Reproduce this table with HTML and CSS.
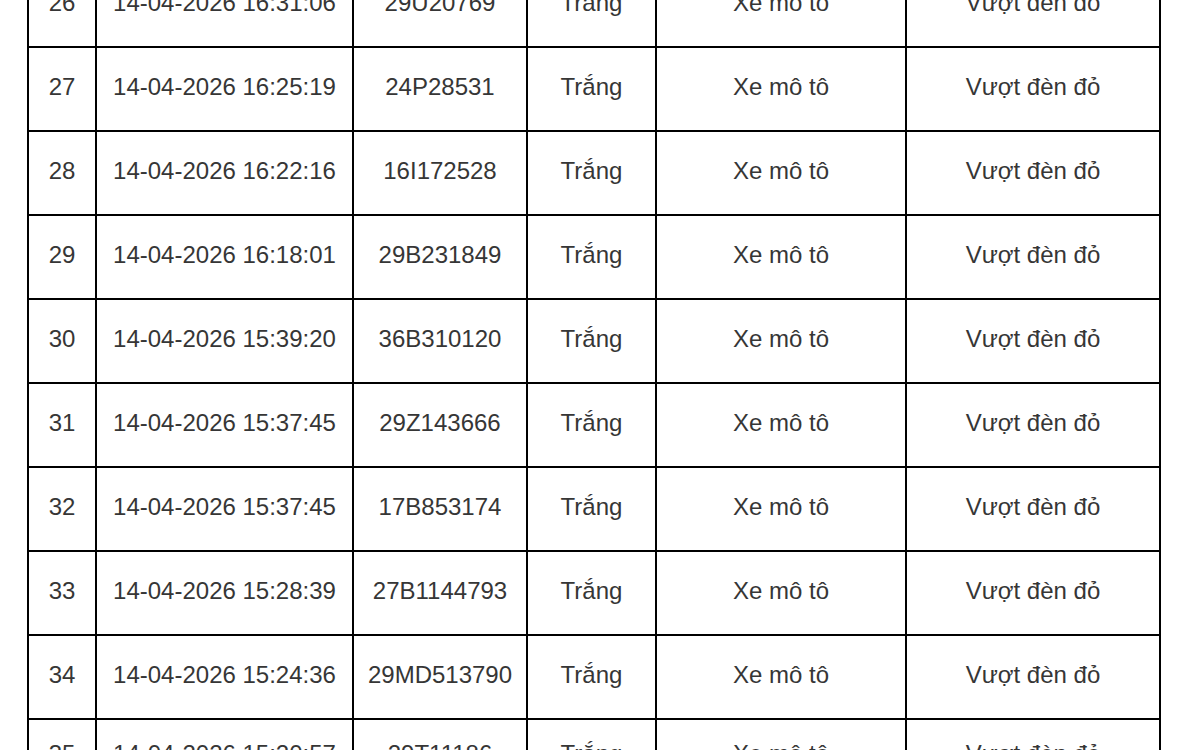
FILE: index.html
```html
<!DOCTYPE html>
<html lang="vi">
<head>
<meta charset="utf-8">
<title>Danh sách vi phạm</title>
<link rel="stylesheet" href="styles.css">
</head>
<body>
<div class="page">
<table class="violations">
<colgroup>
<col class="c-stt"><col class="c-time"><col class="c-plate"><col class="c-color"><col class="c-type"><col class="c-act">
</colgroup>
<tbody>
<tr><td>26</td><td>14-04-2026 16:31:06</td><td>29U20769</td><td>Trắng</td><td>Xe mô tô</td><td>Vượt đèn đỏ</td></tr>
<tr><td>27</td><td>14-04-2026 16:25:19</td><td>24P28531</td><td>Trắng</td><td>Xe mô tô</td><td>Vượt đèn đỏ</td></tr>
<tr><td>28</td><td>14-04-2026 16:22:16</td><td>16I172528</td><td>Trắng</td><td>Xe mô tô</td><td>Vượt đèn đỏ</td></tr>
<tr><td>29</td><td>14-04-2026 16:18:01</td><td>29B231849</td><td>Trắng</td><td>Xe mô tô</td><td>Vượt đèn đỏ</td></tr>
<tr><td>30</td><td>14-04-2026 15:39:20</td><td>36B310120</td><td>Trắng</td><td>Xe mô tô</td><td>Vượt đèn đỏ</td></tr>
<tr><td>31</td><td>14-04-2026 15:37:45</td><td>29Z143666</td><td>Trắng</td><td>Xe mô tô</td><td>Vượt đèn đỏ</td></tr>
<tr><td>32</td><td>14-04-2026 15:37:45</td><td>17B853174</td><td>Trắng</td><td>Xe mô tô</td><td>Vượt đèn đỏ</td></tr>
<tr><td>33</td><td>14-04-2026 15:28:39</td><td>27B1144793</td><td>Trắng</td><td>Xe mô tô</td><td>Vượt đèn đỏ</td></tr>
<tr><td>34</td><td>14-04-2026 15:24:36</td><td>29MD513790</td><td>Trắng</td><td>Xe mô tô</td><td>Vượt đèn đỏ</td></tr>
<tr class="last"><td>35</td><td>14-04-2026 15:20:57</td><td>29T11186</td><td>Trắng</td><td>Xe mô tô</td><td>Vượt đèn đỏ</td></tr>
</tbody>
</table>
</div>
</body>
</html>
```

FILE: styles.css
```css
html, body {
  margin: 0;
  padding: 0;
  background: #ffffff;
  overflow: hidden;
}
.page {
  padding-left: 27px;
  margin-top: -38px;
}
.violations {
  border-collapse: collapse;
  table-layout: fixed;
  width: 1134px;
  font-family: "Liberation Sans", Arial, Helvetica, sans-serif;
  font-size: 24px;
  color: #363636;
}
.c-stt { width: 68px; }
.c-time { width: 257px; }
.c-plate { width: 174px; }
.c-color { width: 129px; }
.c-type { width: 250px; }
.c-act { width: 254px; }
.violations td {
  border: 2px solid #000000;
  height: 84px;
  padding: 0 4px 4px;
  text-align: center;
  vertical-align: middle;
  white-space: nowrap;
  box-sizing: border-box;
}
.violations tr.last td {
  padding-bottom: 14px;
}
```
